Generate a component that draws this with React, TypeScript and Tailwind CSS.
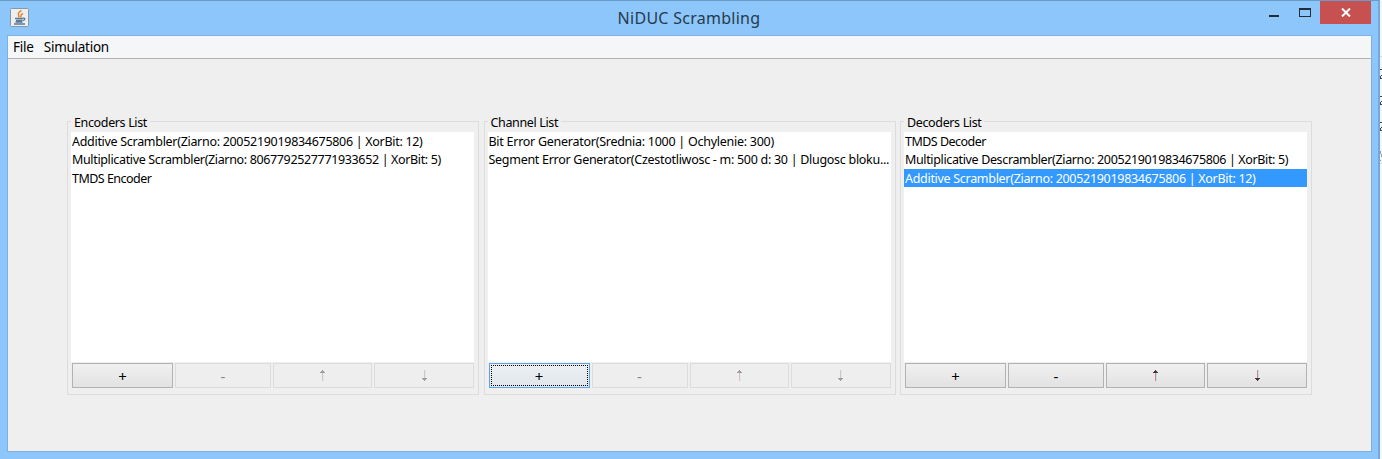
import React from "react";

type PanelData = { title: string; rows: { text: string; cls: string }[]; enabled: boolean; focused?: boolean };

const panels: PanelData[] = [
  {
    title: "Encoders List", enabled: false,
    rows: [
      { text: "Additive Scrambler(Ziarno: 2005219019834675806 | XorBit: 12)", cls: "tracking-[-0.3px]" },
      { text: "Multiplicative Scrambler(Ziarno: 8067792527771933652 | XorBit: 5)", cls: "tracking-[-0.355px]" },
      { text: "TMDS Encoder", cls: "tracking-[-0.53px]" },
    ],
  },
  {
    title: "Channel List", enabled: false, focused: true,
    rows: [
      { text: "Bit Error Generator(Srednia: 1000 | Ochylenie: 300)", cls: "tracking-[-0.265px]" },
      { text: "Segment Error Generator(Czestotliwosc - m: 500 d: 30 | Dlugosc bloku...", cls: "tracking-[-0.285px]" },
    ],
  },
  {
    title: "Decoders List", enabled: true,
    rows: [
      { text: "TMDS Decoder", cls: "tracking-[-0.53px]" },
      { text: "Multiplicative Descrambler(Ziarno: 2005219019834675806 | XorBit: 5)", cls: "tracking-[-0.36px]" },
      { text: "Additive Scrambler(Ziarno: 2005219019834675806 | XorBit: 12)", cls: "tracking-[-0.3px] bg-[#3399ff] text-white" },
    ],
  },
];

function Arrow({ down, enabled }: { down?: boolean; enabled: boolean }) {
  const stem = enabled ? "#c98787" : "#e3bcbc";
  const fringe = enabled ? "#c0e4e6" : "#d5eeee";
  const head = enabled ? "#40383c" : "#a09c9c";
  return (
    <svg width="7" height="11" viewBox="0 0 7 11" shapeRendering="crispEdges">
      <path d={down ? "M3 0h1v8H3z" : "M3 3h1v8H3z"} fill={stem} />
      <path d={down ? "M4 0h1v8H4z" : "M4 3h1v8H4z"} fill={fringe} />
      <path d={down ? "M1 8h5v1H5v1H4v1H3v-1H2v-1H1z" : "M3 0h1v1h1v1h1v1H1V2h1V1h1z"} fill={head} />
    </svg>
  );
}

function Btn({ w, enabled, focused, children }: { w: string; enabled: boolean; focused?: boolean; children: React.ReactNode }) {
  const look = focused
    ? "border-[#5ba4ee] bg-linear-to-b from-[#ecf0f3] to-[#e0e6eb] p-px"
    : enabled
      ? "border-[#b2b2b2] bg-linear-to-b from-[#f0f0f0] to-[#e2e2e2]"
      : "border-[#dcdcdc] bg-[#eeeeee] text-[#888]";
  return (
    <button className={`h-[25px] shrink-0 border ${w} ${look}`}>
      <span className={`flex h-full items-center justify-center ${focused ? "border border-dotted border-black" : ""}`}>{children}</span>
    </button>
  );
}

function Panel({ p }: { p: PanelData }) {
  return (
    <section className="relative h-[274px] w-[412px] shrink-0 border border-[#dcdcdc] pt-[10px] pl-[3px]">
      <h2 className="absolute -top-[8px] left-[3px] bg-[#efefef] px-[3px] text-[12.5px] leading-[18px] tracking-[-0.36px]">{p.title}</h2>
      <div className="h-[230px] w-[403px] overflow-hidden bg-white">
        {p.rows.map((r) => (
          <div key={r.text} className={`h-[18.4px] pl-px text-[12.5px] leading-[19px] whitespace-nowrap ${r.cls}`}>{r.text}</div>
        ))}
      </div>
      <div className="flex gap-[2px] pt-px pl-px text-[15px] leading-[20px]">
        <Btn w="w-[101px]" enabled focused={p.focused}>+</Btn>
        <Btn w="w-[96px]" enabled={p.enabled}>-</Btn>
        <Btn w="w-[99px]" enabled={p.enabled}><Arrow enabled={p.enabled} /></Btn>
        <Btn w="w-[100px]" enabled={p.enabled}><Arrow down enabled={p.enabled} /></Btn>
      </div>
    </section>
  );
}

function JavaIcon() {
  return (
    <svg width="19" height="19" viewBox="0 0 19 19">
      <rect x=".5" y=".5" width="18" height="18" rx="1" fill="#eeeeec" stroke="#8299ad" />
      <path d="M11.5 2.5C5 6.500 10.500 6.500 8.500 9.500M13 5.500c-3.500 1.500-1 2.500-2.500 4" fill="none" stroke="#e88739" strokeWidth="1.6" />
      <path d="M5 10.500h8M6 12.500h6M5.500 14h7M13 10.200c3-.7 2 2.300-.5 2.300M4 16h11" fill="none" stroke="#587b99" strokeWidth="1.3" />
    </svg>
  );
}

export default function App() {
  return (
    <div className="flex h-[459px] w-[1382px] overflow-hidden bg-[#f5f5f5] font-['Noto_Sans',sans-serif] text-black">
      <div className="flex h-full w-[1380px] shrink-0 flex-col border-t border-r-2 border-t-[#6a9bc8] border-r-[#77a8d8] bg-[#8cc6fa]">
        <header className="flex h-[34px] shrink-0">
          <div className="w-[480px] pt-[7px] pl-[10px]"><JavaIcon /></div>
          <h1 className="w-[418px] pt-[5px] text-center text-[16px] leading-[24px] tracking-[0.27px] text-[#263a4d]">NiDUC Scrambling</h1>
          <div className="flex grow justify-end">
            <svg width="52" height="24" viewBox="0 0 52 24" className="-mr-px" shapeRendering="crispEdges">
              <path d="M0 14h10v2H0z" fill="#222d36" />
              <path d="M30 7h12v9H30zM31 9h10v6H31z" fill="#222d36" fillRule="evenodd" />
            </svg>
            <div className="mr-[7px] flex h-[23px] w-[51px] items-center justify-center bg-[#c75050]">
              <svg width="10" height="9" viewBox="0 0 10 9"><path d="M1 .5l8 8M9 .5l-8 8" stroke="#fff" strokeWidth="2" /></svg>
            </div>
          </div>
        </header>
        <main className="ml-[7px] h-[417px] w-[1365px] border border-[#7eb1df] bg-[#efefef]">
          <nav className="flex h-[23px] gap-[10px] border-b border-[#b1b3b5] bg-[#f4f6f8] pl-[5px] text-[13.5px] leading-[22px]">
            <span className="tracking-[-0.2px]">File</span>
            <span className="tracking-[-0.27px]">Simulation</span>
          </nav>
          <div className="flex gap-[4.5px] pt-[62px] pl-[59px]">
            {panels.map((p) => <Panel key={p.title} p={p} />)}
          </div>
        </main>
      </div>
      <svg width="2" height="459" viewBox="0 0 2 459" className="shrink-0" shapeRendering="crispEdges">
        <path d="M0 56h2v1H0zM0 163h2v1H0z" fill="#d8d8d8" />
        <path d="M0 69h2v1H0zM1 75h1v1H1zM0 76h1v3H0zM0 78h2v1H0zM0 96h2v1H0zM1 101h1v1H1zM0 102h1v3H0zM0 104h2v1H0zM0 122h2v1H0zM1 127h1v1H1zM0 128h1v3H0zM0 130h2v1H0z" fill="#444" />
        <path d="M0 151h1v3H0zM1 154h1v3H1zM0 160h1v1H0z" fill="#999" />
      </svg>
    </div>
  );
}
